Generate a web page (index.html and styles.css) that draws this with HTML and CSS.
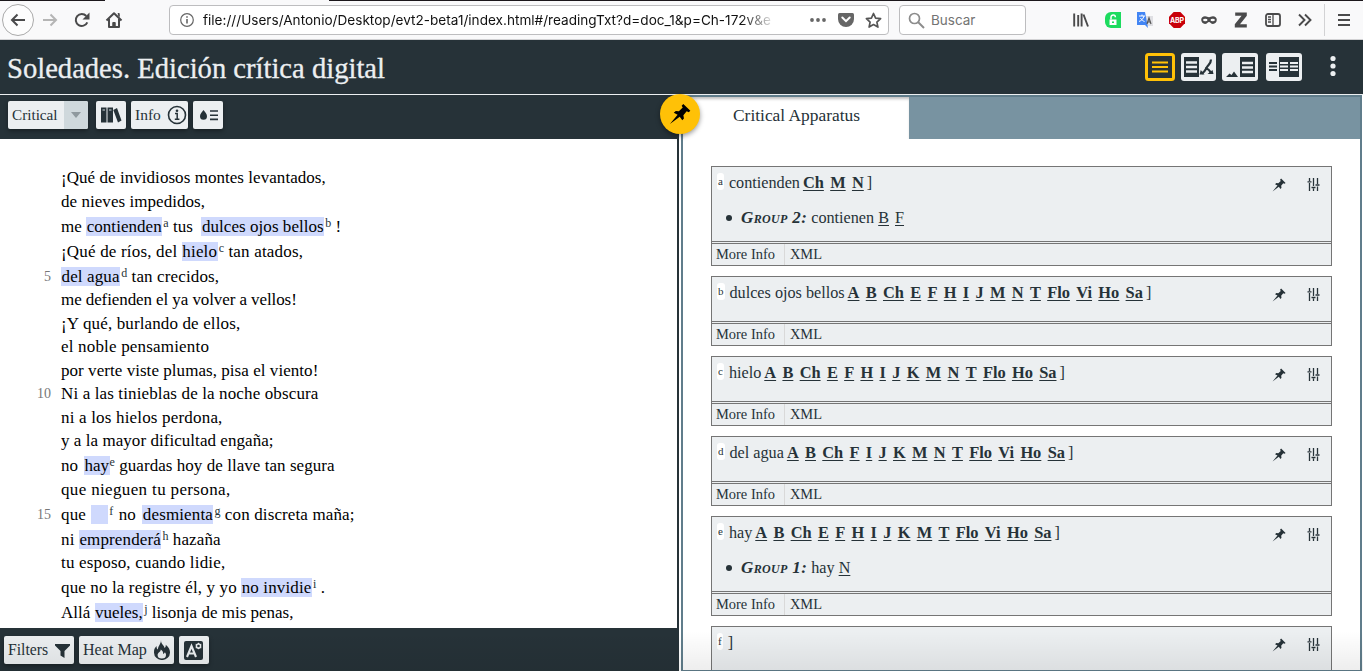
FILE: index.html
```html
<!DOCTYPE html>
<html lang="es">
<head>
<meta charset="utf-8">
<title>Soledades. Edición crítica digital</title>
<link rel="stylesheet" href="styles.css">
</head>
<body>
<svg class="defs" width="0" height="0">
  <symbol id="pin" viewBox="0 0 24 24"><path d="M1 23 9.400 12.800 5.200 10.600 7.400 8.600 10.800 9 15 5 13.800 3 15.600 1 23.300 8.400 21.500 10 19.300 9 15.700 13.300 16.300 16.800 14.500 18.800 11.700 15Z" fill="currentColor"/></symbol>
  <symbol id="sliders" viewBox="0 0 13 13"><path d="M2.500 0v3M2.500 5v8M6.500 0v8M6.500 10.500v2.500M10.500 0v6M10.500 8.500v4.500M.5 3.800h4M4.500 9.500h4M8.500 7h4" stroke="currentColor" stroke-width="1.300" fill="none"/></symbol>
</svg>
<div class="browser">
  <div class="tabgap"></div>
  <span class="back"><svg width="18" height="18" viewBox="0 0 18 18"><path d="M16 9H3M8.500 3.500 3 9l5.500 5.500" stroke="#4a4a4b" stroke-width="2" fill="none"/></svg></span>
  <svg class="fwd" width="18" height="18" viewBox="0 0 18 18"><path d="M2 9h13M9.500 3.500 15 9l-5.500 5.500" stroke="#b5b5b5" stroke-width="2" fill="none"/></svg>
  <svg class="reload" width="18" height="18" viewBox="0 0 18 18"><path d="M14.300 11.300A6 6 0 1 1 13.300 5" stroke="#4a4a4b" stroke-width="2" fill="none"/><path d="M16.500 1.500v7h-7z" fill="#4a4a4b"/></svg>
  <svg class="home" width="18" height="18" viewBox="0 0 18 18"><path d="M1.500 9.500 9 2.200l7.500 7.300M4 8v8h10V8" stroke="#4a4a4b" stroke-width="2" fill="none" stroke-linejoin="round"/><path d="M7.800 16v-4.500h2.400V16M13 2.500h1.200v3z" stroke="#4a4a4b" fill="#4a4a4b"/></svg>
  <div class="urlbar">
    <svg width="14" height="14" viewBox="0 0 14 14"><circle cx="7" cy="7" r="6.300" stroke="#666" stroke-width="1.200" fill="none"/><path d="M7 6v4.500M7 3.200v1.600" stroke="#666" stroke-width="1.600"/></svg>
    <span class="url">file:///Users/Antonio/Desktop/evt2-beta1/index.html#/readingTxt?d=doc_1&amp;p=Ch-172v&amp;e</span>
    <svg class="dots" width="16" height="6" viewBox="0 0 16 6"><g fill="#666"><circle cx="2" cy="3" r="1.900"/><circle cx="8" cy="3" r="1.900"/><circle cx="14" cy="3" r="1.900"/></g></svg>
    <svg class="pocket" width="16" height="14" viewBox="0 0 16 14"><path d="M1.500 0h13Q16 0 16 1.500V6a8 8 0 0 1-16 0V1.500Q0 0 1.500 0Z" fill="#666"/><path d="m4.300 4.500 3.700 3.700 3.700-3.700" stroke="#fff" stroke-width="2" fill="none" stroke-linecap="round"/></svg>
    <svg class="star" width="17" height="17" viewBox="0 0 17 17"><path d="m8.500 1.500 2.100 4.600 5 .6-3.700 3.400 1 5-4.400-2.500-4.400 2.500 1-5L1.400 6.700l5-.6Z" stroke="#555" stroke-width="1.700" fill="none" stroke-linejoin="round"/></svg>
  </div>
  <div class="search">
    <svg width="17" height="17" viewBox="0 0 17 17"><circle cx="6.500" cy="6.500" r="5" stroke="#8c8c8c" stroke-width="1.700" fill="none"/><path d="m10 10 6 6" stroke="#8c8c8c" stroke-width="1.900"/></svg>
    <span>Buscar</span>
  </div>
  <div class="addons">
    <svg width="16" height="16" viewBox="0 0 16 16"><path d="M1.200 1.500v13M5.200 3v11.500M8.600 1.500v13M10.500 2.500l4.500 12" stroke="#4a4a4b" stroke-width="1.900"/></svg>
    <svg width="16" height="16" viewBox="0 0 16 16"><path d="M6 0h10v16H6a6 6 0 0 1-6-6V6a6 6 0 0 1 6-6Z" fill="#1ddb5f"/><path d="M4.500 7.500h7V13h-7z" fill="#fff"/><path d="M6 7.500V5.200a2.200 2.200 0 0 1 4.400 0" stroke="#fff" stroke-width="1.500" fill="none"/><path d="M7 10.200h2" stroke="#1ddb5f" stroke-width="1.500"/></svg>
    <svg width="16" height="16" viewBox="0 0 16 16"><path d="M7 4h9v10H9z" fill="#dfdfe3"/><path d="M0 0h8l3 16-3-3H0z" fill="#4285f4"/><path d="M2 4h6M5 2.500V4M7 4c-.8 3-2.500 4.500-5 5.500M3.500 6c1 1.800 2.500 3 4 3.500" stroke="#fff" fill="none"/><path d="m10 12 2-6 2 6M10.600 10h2.800" stroke="#555" stroke-width="1.200" fill="none"/></svg>
    <svg width="16" height="16" viewBox="0 0 16 16"><path d="M4.700 0h6.600L16 4.700v6.600L11.300 16H4.700L0 11.300V4.700Z" fill="#c8000a"/><text class="abp" x="8" y="10.700" text-anchor="middle" textLength="14">ABP</text></svg>
    <svg width="16" height="16" viewBox="0 0 16 16"><path d="M4 4.300c2 0 2.500 1 4 1s2-1 4-1 3.800 1.200 3.800 3.500S14 12 12 12s-2.700-2-4-2-2 2-4 2S.2 10 .2 7.800 2 4.300 4 4.300Z" fill="#4a4a4b"/><ellipse cx="4.300" cy="8" rx="2.200" ry="1.200" fill="#f9f9fa"/><ellipse cx="11.700" cy="8" rx="2.200" ry="1.200" fill="#f9f9fa"/></svg>
    <svg width="16" height="16" viewBox="0 0 16 16"><path d="M2.200.500h11.600v3.200L7 12.200h6.800v3.300H1.800v-3.200L8.600 3.800H2.200Z" fill="#4a4a4b"/></svg>
    <svg width="16" height="16" viewBox="0 0 16 16"><rect x="1" y="2" width="14" height="12" rx="2" stroke="#4a4a4b" stroke-width="1.800" fill="none"/><path d="M8 2v12M3 5h3M3 7.500h3M3 10h3" stroke="#4a4a4b" stroke-width="1.300"/></svg>
    <svg width="16" height="16" viewBox="0 0 16 16"><path d="m2 2.500 5.500 5.500L2 13.500M8 2.500 13.500 8 8 13.500" stroke="#4a4a4b" stroke-width="1.900" fill="none"/></svg>
  </div>
  <div class="burger"><svg width="12" height="14" viewBox="0 0 12 14"><path d="M0 2h12M0 7h12M0 12h12" stroke="#4a4a4b" stroke-width="2"/></svg></div>
</div>

<header class="header">
  <h1>Soledades. Edición crítica digital</h1>
  <div class="views">
    <svg class="v1" width="30" height="28" viewBox="0 0 30 28"><rect x="1.500" y="1.500" width="27" height="25" rx="2" fill="none" stroke="#ffc107" stroke-width="3"/><path d="M7 9.500h16M7 14h16M7 18.500h16" stroke="#ffc107" stroke-width="2.200"/></svg>
    <svg class="v2" width="35" height="28" viewBox="0 0 35 28"><rect width="35" height="28" rx="3" fill="#eceff1"/><path d="M3 4h15v20H3z" fill="#263238"/><path d="M5 9.500h11M5 14h11M5 18.500h11" stroke="#eceff1" stroke-width="2.300"/><path d="M30 6.500c0 4-2.500 5-4 7.500s-1.500 4-5 6.500M24 15.500c3.500 0 5 2 6 5" fill="none" stroke="#263238" stroke-width="2.200"/><path d="m18.500 21.500 1.300-4.500 3.700 4.500zM26.500 21h6l-1-4z" fill="#263238"/></svg>
    <svg class="v3" width="36" height="28" viewBox="0 0 36 28"><rect width="36" height="28" rx="3" fill="#eceff1"/><path d="M18 4h15v20H18z" fill="#263238"/><path d="M20 10h11M20 14.500h11M20 19h11" stroke="#eceff1" stroke-width="2.300"/><path d="m4 24 3.500-3.500 2 1.500 2.500-3.500 4 5.500z" fill="#263238"/></svg>
    <svg class="v4" width="36" height="28" viewBox="0 0 36 28"><rect width="36" height="28" rx="3" fill="#eceff1"/><path d="M13 4h20v20H13z" fill="#263238"/><path d="M3 10h8M3 13.500h8M3 17h8" stroke="#263238" stroke-width="2"/><path d="M14 10h8M14 13.500h8M14 17h8M24 10h8M24 13.500h8M24 17h8" stroke="#eceff1" stroke-width="2"/></svg>
    <svg class="more" width="6" height="22" viewBox="0 0 6 22"><g fill="#eceff1"><circle cx="3" cy="3.500" r="2.600"/><circle cx="3" cy="11" r="2.600"/><circle cx="3" cy="18.500" r="2.600"/></g></svg>
  </div>
</header>

<main class="main">
  <section class="left">
    <div class="toolbar">
      <div class="select"><span>Critical</span><i></i></div>
      <div class="btn books"><svg width="22" height="18" viewBox="0 0 22 18"><path d="M1 1.500h5.500v15H1zM7.500 1.500H13v15H7.500zM13.300 4l3.700-2 4.500 12.500-3.500 2z" fill="#263238"/><path d="M2.500 4h2.500M9 4h2.500" stroke="#cfd8dc"/></svg></div>
      <div class="btn info">Info<svg width="20" height="20" viewBox="0 0 20 20"><circle cx="10" cy="10" r="8.500" stroke="#263238" stroke-width="1.600" fill="none"/><path d="M8 8.500h2.200V14M7.800 14.200h4.600" stroke="#263238" stroke-width="1.500" fill="none"/><circle cx="10" cy="5.800" r="1.300" fill="#263238"/></svg></div>
      <div class="btn drop"><svg width="20" height="14" viewBox="0 0 20 14"><path d="M4.500 2C6 4 8 6 8 8.200a3.500 3.500 0 0 1-7 0C1 6 3 4 4.500 2Z" fill="#263238"/><path d="M11 3h8M11 7.200h8M11 11.400h8" stroke="#263238" stroke-width="1.600"/></svg></div>
    </div>
    <div class="poem">
      <p class="t1">¡Qué de invidiosos montes levantados,</p>
      <p class="t1">de nieves impedidos,</p>
      <p class="noted t1">me <mark>contienden</mark><sup>a</sup> tus&nbsp; <mark>dulces ojos bellos</mark><sup>b</sup> !</p>
      <p class="noted t3">¡Qué de ríos, del <mark>hielo</mark><sup>c</sup> tan atados,</p>
      <p class="noted t2"><b>5</b><mark>del agua</mark><sup>d</sup> tan crecidos,</p>
      <p class="t0">me defienden el ya volver a vellos!</p>
      <p class="t2">¡Y qué, burlando de ellos,</p>
      <p class="t3">el noble pensamiento</p>
      <p class="t1">por verte viste plumas, pisa el viento!</p>
      <p class="t2"><b>10</b>Ni a las tinieblas de la noche obscura</p>
      <p class="t3">ni a los hielos perdona,</p>
      <p class="t1">y a la mayor dificultad engaña;</p>
      <p class="noted t1">no <mark class="hay">hay</mark><sup>e</sup> guardas hoy de llave tan segura</p>
      <p class="t4">que nieguen tu persona,</p>
      <p class="noted t2"><b>15</b>que <mark class="blank"></mark><sup class="after-blank">f</sup> no&nbsp;<mark class="spaced">desmienta</mark><sup>g</sup> con discreta maña;</p>
      <p class="noted t2">ni <mark>emprenderá</mark><sup>h</sup> hazaña</p>
      <p class="t3">tu esposo, cuando lidie,</p>
      <p class="noted t2">que no la registre él, y yo <mark>no invidie</mark><sup>i</sup> .</p>
      <p class="noted">Allá <mark>vueles,</mark><sup>j</sup> lisonja de mis penas,</p>
    </div>
    <div class="bottombar">
      <div class="btn filters">Filters<svg width="15" height="15" viewBox="0 0 15 15"><path d="M0 1h15v1.500L9.500 8v7l-4-2.500V8L0 2.500Z" fill="#263238"/></svg></div>
      <div class="btn heat">Heat Map<svg width="16" height="20" viewBox="0 0 16 20"><path d="M7 0c0 5 3 4.500 3.500 8 1-.7 1.500-2 1.200-3.300C14.500 7 16 9.500 16 12.200A7.600 7.600 0 0 1 8 20a7.600 7.600 0 0 1-8-7.800C0 9 1 7.500 2.600 6c-.1 2 .3 3 1.300 3.500C4 6 7 4 7 0ZM6.700 9.500C7 12 3.600 12.500 3.600 15a4.200 3.600 0 0 0 8.400 0c0-1.200-.5-2-1.200-2.700-.3 1-.8 1.400-1.800 1.600C9.500 12 8.300 10.500 6.700 9.500Z" fill="#263238" fill-rule="evenodd"/></svg></div>
      <div class="btn font"><svg width="19" height="19" viewBox="0 0 19 19"><rect width="19" height="19" rx="2" fill="#263238"/><path d="m3 16 4.500-11L12 16M4.800 12.500h5.400" stroke="#eceff1" stroke-width="2.100" fill="none"/><circle cx="14.500" cy="5" r="2.100" stroke="#eceff1" stroke-width="1.500" fill="none"/><path d="M14.500 1.800v6.400M11.700 3.400l5.600 3.200M11.700 6.600l5.600-3.200" stroke="#eceff1"/><circle cx="14.500" cy="5" r="1.300" fill="#263238"/></svg></div>
    </div>
  </section>

  <section class="right">
    <div class="tabs"><div class="tab">Critical Apparatus</div></div>
    <div class="entries">
      <article class="card tall">
        <div class="entry"><sup>a</sup><span class="lemma">contienden</span><span class="wits"><u>Ch</u><u>M</u><u>N</u></span>]<span class="tools"><svg class="pin"><use href="#pin"/></svg><svg class="sl"><use href="#sliders"/></svg></span></div>
        <div class="group"><em>Group 2:</em> contienen <u>B</u><u>F</u></div>
        <footer><span>More Info</span><span>XML</span></footer>
      </article>
      <article class="card">
        <div class="entry"><sup>b</sup><span class="lemma">dulces ojos bellos</span><span class="wits"><u>A</u><u>B</u><u>Ch</u><u>E</u><u>F</u><u>H</u><u>I</u><u>J</u><u>M</u><u>N</u><u>T</u><u>Flo</u><u>Vi</u><u>Ho</u><u>Sa</u></span>]<span class="tools"><svg class="pin"><use href="#pin"/></svg><svg class="sl"><use href="#sliders"/></svg></span></div>
        <footer><span>More Info</span><span>XML</span></footer>
      </article>
      <article class="card">
        <div class="entry"><sup>c</sup><span class="lemma">hielo</span><span class="wits"><u>A</u><u>B</u><u>Ch</u><u>E</u><u>F</u><u>H</u><u>I</u><u>J</u><u>K</u><u>M</u><u>N</u><u>T</u><u>Flo</u><u>Ho</u><u>Sa</u></span>]<span class="tools"><svg class="pin"><use href="#pin"/></svg><svg class="sl"><use href="#sliders"/></svg></span></div>
        <footer><span>More Info</span><span>XML</span></footer>
      </article>
      <article class="card">
        <div class="entry"><sup>d</sup><span class="lemma">del agua</span><span class="wits"><u>A</u><u>B</u><u>Ch</u><u>F</u><u>I</u><u>J</u><u>K</u><u>M</u><u>N</u><u>T</u><u>Flo</u><u>Vi</u><u>Ho</u><u>Sa</u></span>]<span class="tools"><svg class="pin"><use href="#pin"/></svg><svg class="sl"><use href="#sliders"/></svg></span></div>
        <footer><span>More Info</span><span>XML</span></footer>
      </article>
      <article class="card tall">
        <div class="entry"><sup>e</sup><span class="lemma">hay</span><span class="wits"><u>A</u><u>B</u><u>Ch</u><u>E</u><u>F</u><u>H</u><u>I</u><u>J</u><u>K</u><u>M</u><u>T</u><u>Flo</u><u>Vi</u><u>Ho</u><u>Sa</u></span>]<span class="tools"><svg class="pin"><use href="#pin"/></svg><svg class="sl"><use href="#sliders"/></svg></span></div>
        <div class="group"><em>Group 1:</em> hay <u>N</u></div>
        <footer><span>More Info</span><span>XML</span></footer>
      </article>
      <article class="card">
        <div class="entry"><sup>f</sup>]<span class="tools"><svg class="pin"><use href="#pin"/></svg><svg class="sl"><use href="#sliders"/></svg></span></div>
      </article>
    </div>
  </section>
  <div class="pinbadge"><svg width="22" height="22"><use href="#pin"/></svg></div>
  <div class="fade"></div>
</main>
</body>
</html>
```
FILE: styles.css
```css
* { box-sizing: border-box; }
html, body { height: 100%; }
body { margin: 0; width: 1363px; height: 671px; overflow: hidden; display: flex; flex-direction: column; font-family: "Liberation Serif", serif; color: #263238; background: #fff; }
svg { display: block; flex: none; }
.defs { position: absolute; }

/* browser toolbar */
.browser { height: 40px; flex: none; position: relative; display: flex; align-items: center; background: #f9f9fa; border-top: 1px solid #1b171b; border-bottom: 1px solid #d2d2d4; font-family: Inter, sans-serif; }
.tabgap { position: absolute; left: 105px; top: -1px; width: 224px; height: 1px; background: #f9f9fa; }
.back { width: 32px; height: 32px; margin-left: 2px; border: 1px solid #aaa; border-radius: 50%; display: grid; place-items: center; background: #fdfdfd; }
.fwd { margin-left: 7px; }
.reload { margin-left: 14px; }
.home { margin-left: 14px; }
.urlbar { width: 720px; height: 30px; margin-left: 46px; padding: 0 6px 0 10px; display: flex; align-items: center; border: 1px solid #bdbdbf; border-radius: 4px; background: #fff; }
.url { width: 573px; margin-left: 9px; white-space: nowrap; font-size: 13.6px; color: #111; -webkit-mask-image: linear-gradient(90deg, #000 94%, transparent); mask-image: linear-gradient(90deg, #000 94%, transparent); }
.dots { margin-left: 34px; }
.pocket { margin-left: 12px; }
.star { margin-left: 11px; }
.search { width: 127px; height: 30px; margin-left: 10px; padding-left: 8px; display: flex; align-items: center; gap: 6px; border: 1px solid #bdbdbf; border-radius: 4px; background: #fff; color: #737373; font-size: 13.5px; }
.addons { display: flex; gap: 16px; margin-left: 47px; }
.abp { font: bold 7px Inter, sans-serif; fill: #fff; }
.burger { margin-left: 11px; height: 32px; border-left: 1px solid #d2d2d4; padding-left: 13px; display: flex; align-items: center; }

/* edition header */
.header { height: 55px; flex: none; display: flex; align-items: center; justify-content: space-between; padding: 0 27px 0 7px; background: #263238; border-bottom: 1px solid #eceff1; color: #eceff1; }
h1 { margin: 4px 0 0; font-size: 28.6px; font-weight: 400; line-height: 50px; white-space: nowrap; -webkit-text-stroke: .3px #eceff1; }
.views { display: flex; align-items: center; }
.v2 { margin-left: 6px; }
.v3 { margin-left: 6px; }
.v4 { margin-left: 8px; }
.more { margin-left: 28px; margin-top: -2px; }

.main { flex: 1; min-height: 0; display: flex; position: relative; }
.left { width: 679px; display: flex; flex-direction: column; border-right: 2px solid #263238; }
.toolbar { height: 44px; flex: none; margin-right: -2px; padding: 6px 8px 0; display: flex; background: #263238; font-size: 15.5px; }
.btn, .select { height: 28px; display: flex; align-items: center; background: #eceff1; border-radius: 2px; box-shadow: 0 2px 4px rgba(0,0,0,.35); white-space: nowrap; }
.select { width: 80px; font-size: 15.2px; padding-left: 4px; justify-content: space-between; }
.select i { width: 24px; height: 28px; background: #cfd8dc; display: grid; place-items: center; border-radius: 0 2px 2px 0; }
.select i::after { content: ""; border: 5px solid transparent; border-top: 6px solid #8f999e; border-bottom: 0; }
.books { width: 30px; margin-left: 8px; padding-left: 4px; }
.info { width: 57px; margin-left: 5px; padding-left: 4px; gap: 6px; }
.drop { width: 30px; margin-left: 5px; padding-left: 6px; }

/* verses; t0–t4 set the tracking of a line */
.poem { flex: 1; min-height: 0; overflow: hidden; padding: 27px 0 0 61px; font-size: 17px; color: #000; }
.poem p { margin: 0; height: 23.5px; line-height: 23.5px; white-space: nowrap; position: relative; }
.poem .noted { height: 25px; padding-top: 1.5px; }
.poem .t0 { letter-spacing: -.09px; }
.poem .t1 { letter-spacing: .05px; }
.poem .t2 { letter-spacing: .13px; }
.poem .t3 { letter-spacing: .18px; }
.poem .t4 { letter-spacing: .35px; }
.poem mark { display: inline-block; height: 19px; line-height: 19px; padding: 0 .5px; background: #cfd9fd; color: inherit; }
.poem .hay { margin-left: 1.5px; }
.poem .hay + sup { margin-left: 0; }
.poem .blank { width: 17px; vertical-align: -4px; margin-left: 1px; }
.poem .after-blank { margin-right: 1px; }
.poem .spaced { margin-left: 2px; }
.poem sup { font-size: 12px; line-height: 0; vertical-align: 5px; color: #263238; margin-left: 1px; letter-spacing: 0; }
.poem b { position: absolute; left: -30px; width: 20px; text-align: right; font-size: 14px; font-weight: 400; color: #777; letter-spacing: 0; }

.bottombar { height: 43px; flex: none; margin-right: -2px; padding: 8px 4px 0; display: flex; gap: 5px; background: #263238; font-size: 15.7px; }
.filters { width: 70px; padding-left: 4px; gap: 7px; }
.heat { width: 95px; padding-left: 4px; gap: 7px; font-size: 16.1px; }
.font { width: 30px; padding-left: 5px; }

/* critical apparatus */
.right { width: 681px; margin-left: 2px; border: 2px solid #607d8b; border-bottom-width: 1px; display: flex; flex-direction: column; overflow: hidden; }
.tabs { height: 42px; flex: none; background: #7893a1; }
.tab { width: 226px; height: 42px; padding: 0 0 4px 50px; line-height: 37px; background: #fff; font-size: 17.4px; box-shadow: inset 0 3px 3px -1px rgba(0,0,0,.25); white-space: nowrap; }
.entries { padding: 27px 28px 0 28px; display: flex; flex-direction: column; gap: 10px; }
.card { height: 70px; flex: none; display: flex; flex-direction: column; border: 1px solid #757575; background: #eceff1; font-size: 16.2px; }
.tall { height: 100px; }
.entry { display: flex; align-items: flex-start; line-height: 33px; padding-left: 5px; white-space: nowrap; height: 34px; flex: none; }
.entry sup { height: 17px; margin-top: 6px; padding: 0 1px; line-height: 16px; font-size: 11px; background: #fff; border-radius: 3px; margin-right: 5px; }
.wits { display: flex; gap: 6.3px; margin: 0 3px; font-weight: 700; font-size: 16.4px; line-height: 32px; }
u { text-underline-offset: 2px; text-decoration-thickness: 1px; }
.tools { margin-left: auto; display: flex; gap: 21px; padding: 11px 11px 0 0; }
.pin { width: 14px; height: 14px; }
.sl { width: 13px; height: 13px; }
.group { display: flex; align-items: center; height: 34px; line-height: 34px; padding-left: 14px; white-space: pre; }
.group::before { content: ""; width: 6px; height: 6px; border-radius: 50%; background: #263238; margin-right: 9px; }
.group em { font-weight: 700; font-variant: small-caps; font-size: 17px; letter-spacing: .35px; }
.group u + u { margin-left: 6px; }
.card footer { margin-top: auto; height: 24px; flex: none; display: flex; border-top: 3px double #757575; font-size: 14.45px; line-height: 20px; }
.card footer span { padding: 0 9px 0 4px; }
.card footer span + span { border-left: 1px solid #d9d9d9; padding-left: 5px; }

.pinbadge { position: absolute; left: 660px; top: -1px; width: 40px; height: 40px; border-radius: 50%; background: #ffc107; color: #000; display: grid; place-items: center; box-shadow: 0 2px 5px rgba(0,0,0,.4); }
.fade { position: absolute; left: 0; right: 0; bottom: 0; height: 40px; background: linear-gradient(transparent, rgba(0,0,0,.07)); pointer-events: none; }
```
